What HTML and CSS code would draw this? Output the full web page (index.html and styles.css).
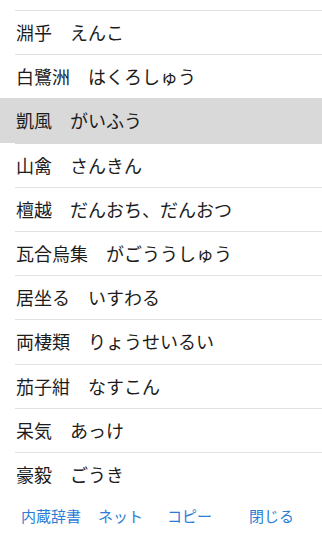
FILE: index.html
```html
<!DOCTYPE html>
<html lang="ja">
<head>
    <meta charset="UTF-8">
    <meta name="viewport" content="width=device-width, initial-scale=1.0">
    <title>読み一覧</title>
    <link rel="stylesheet" href="styles.css">
</head>
<body>
    <div class="sheet">
        <!-- 読みのリスト -->
        <ul class="word-list">
            <li class="word">淵乎　えんこ</li>
            <li class="word">白鷺洲　はくろしゅう</li>
            <li class="word selected">凱風　がいふう</li>
            <li class="word">山禽　さんきん</li>
            <li class="word">檀越　だんおち、だんおつ</li>
            <li class="word">瓦合烏集　がごううしゅう</li>
            <li class="word">居坐る　いすわる</li>
            <li class="word">両棲類　りょうせいるい</li>
            <li class="word">茄子紺　なすこん</li>
            <li class="word">呆気　あっけ</li>
            <li class="word">豪毅　ごうき</li>
        </ul>

        <!-- 下のボタン -->
        <div class="actions">
            <a class="action a-dict" href="#">内蔵辞書</a>
            <a class="action a-net" href="#">ネット</a>
            <a class="action a-copy" href="#">コピー</a>
            <a class="action a-close" href="#">閉じる</a>
        </div>
    </div>
</body>
</html>
```

FILE: styles.css
```css
body {
    margin: 0;
    background: #fff;
    font-family: "Noto Sans CJK JP", "Noto Sans", sans-serif;
    color: #1c1c1c;
}
.sheet {
    width: 322px;
    height: 551px;
    overflow: hidden;
}
.word-list {
    list-style: none;
    margin: 0;
    padding: 10px 0 0 0;
}
.word {
    height: 43.2px;
    line-height: 43.2px;
    font-size: 18px;
    border-top: 1px solid #e2e2e2;
    margin-left: 15px;
    padding-left: 1px;
    white-space: nowrap;
}
.word.selected {
    background: #d9d9d9;
    margin-left: 0;
    padding-left: 16px;
    border-top-color: #d9d9d9;
}
.word.selected + .word {
    border-top-color: #d9d9d9;
}
.actions {
    display: flex;
    align-items: center;
    height: 38px;
    padding-left: 21px;
}
.action {
    color: #2a7dd6;
    text-decoration: none;
    font-size: 15px;
}
.a-net {
    margin-left: 17px;
}
.a-copy {
    margin-left: 24px;
}
.a-close {
    margin-left: 37px;
}
```
